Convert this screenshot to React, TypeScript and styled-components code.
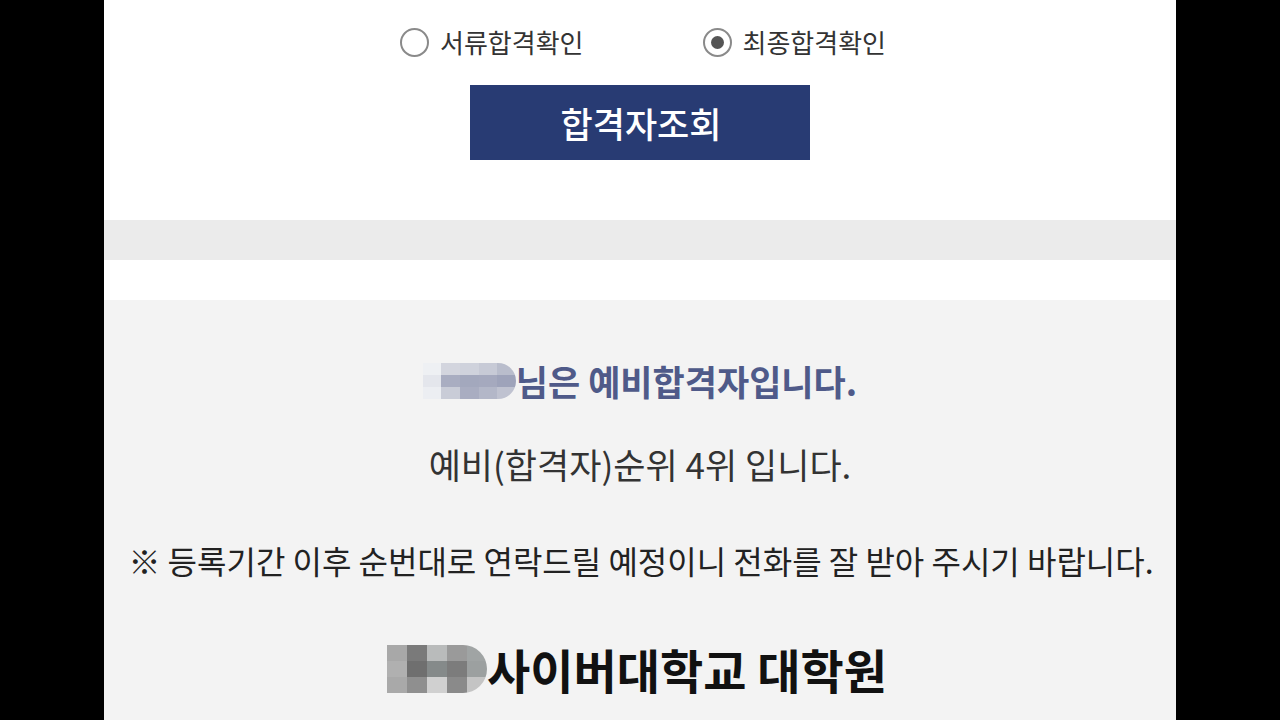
import React from "react";
import styled, { createGlobalStyle } from "styled-components";

const Global = createGlobalStyle`
  html, body { margin: 0; padding: 0; background: #000; }
  body { font-family: "Noto Sans CJK KR", "Noto Sans", sans-serif; }
`;

const Page = styled.div`
  width: 1072px;
  height: 720px;
  margin: 0 auto;
  background: #f3f3f3;
  overflow: hidden;
  display: flex;
  flex-direction: column;
`;

const TopSection = styled.section`
  background: #fff;
  height: 220px;
  display: flex;
  flex-direction: column;
  align-items: center;
  padding-top: 26px;
  box-sizing: border-box;
`;

const RadioRow = styled.div`
  display: flex;
  gap: 119px;
  align-items: center;
  padding-left: 6px;
`;

const RadioLabel = styled.label`
  display: flex;
  align-items: center;
  gap: 11px;
  font-size: 26px;
  color: #333;
  line-height: 32px;
`;

const RadioCircle = styled.span<{ $checked?: boolean }>`
  width: 29px;
  height: 29px;
  box-sizing: border-box;
  border-radius: 50%;
  border: 2px solid #8a8a8a;
  background: #fff;
  display: flex;
  align-items: center;
  justify-content: center;
  &::after {
    content: "";
    display: ${(p) => (p.$checked ? "block" : "none")};
    width: 13px;
    height: 13px;
    border-radius: 50%;
    background: #555;
  }
`;

const SearchButton = styled.button`
  margin-top: 27px;
  width: 340px;
  height: 75px;
  background: #283b73;
  border: none;
  color: #fff;
  font-family: "Noto Sans CJK KR", sans-serif;
  font-size: 35px;
  font-weight: 500;
  padding: 0;
  padding-left: 2px;
`;

const Band = styled.div<{ $bg: string; $h: number }>`
  height: ${(p) => p.$h}px;
  background: ${(p) => p.$bg};
`;

const Result = styled.section`
  flex: 1;
  background: #f3f3f3;
  display: flex;
  flex-direction: column;
  align-items: center;
  padding-top: 60px;
`;

const NameLine = styled.div`
  display: flex;
  align-items: center;
  font-size: 35px;
  font-weight: 700;
  color: #4f5a89;
  line-height: 42px;
`;

const Mosaic = styled.div<{ $cols: number; $cw: number; $rh: number }>`
  display: grid;
  grid-template-columns: repeat(${(p) => p.$cols}, ${(p) => p.$cw}px);
  grid-auto-rows: ${(p) => p.$rh}px;
  border-radius: 0 30px 30px 0;
  overflow: hidden;
`;

const Cell = styled.span<{ $c: string }>`
  background: ${(p) => p.$c};
`;

const RankLine = styled.div`
  margin-top: 41px;
  font-size: 35px;
  color: #333;
  line-height: 42px;
`;

const Notice = styled.div`
  margin-top: 54px;
  font-size: 32px;
  color: #222;
  line-height: 42px;
  padding-left: 2px;
`;

const SchoolTitle = styled.div`
  margin-top: 62px;
  display: flex;
  align-items: center;
  font-size: 47px;
  font-weight: 700;
  color: #111;
  line-height: 52px;
  margin-right: 6px;
`;

const nameCells = [
  "#eef0f3", "#d3d5de", "#cfd2dc", "#c7cad6", "#b9bdcc",
  "#e4e6ec", "#a9adc1", "#a3a8bd", "#a5a9be", "#9ea3ba",
  "#eceef2", "#c9ccd7", "#a9adc1", "#b3b7c8", "#bfc2d0",
];

const titleCells = [
  "#a8a8a8", "#7a7a7a", "#b9bbbb", "#9a9a9a", "#a0a4a4",
  "#b0b0b0", "#6f6f6f", "#858a8a", "#7c7c7c", "#9ca0a0",
  "#a9a9a9", "#8f8f8f", "#d0d0d0", "#8a8a8a", "#c4c4c4",
];

export default function App() {
  return (
    <>
      <Global />
      <Page>
        <TopSection>
          <RadioRow>
            <RadioLabel>
              <RadioCircle />
              서류합격확인
            </RadioLabel>
            <RadioLabel>
              <RadioCircle $checked />
              최종합격확인
            </RadioLabel>
          </RadioRow>
          <SearchButton>합격자조회</SearchButton>
        </TopSection>
        <Band $bg="#ebebeb" $h={40} />
        <Band $bg="#ffffff" $h={40} />
        <Result>
          <NameLine>
            <Mosaic $cols={5} $cw={18.6} $rh={12}>
              {nameCells.map((c, i) => (
                <Cell key={i} $c={c} />
              ))}
            </Mosaic>
            님은 예비합격자입니다.
          </NameLine>
          <RankLine>예비(합격자)순위 4위 입니다.</RankLine>
          <Notice>※ 등록기간 이후 순번대로 연락드릴 예정이니 전화를 잘 받아 주시기 바랍니다.</Notice>
          <SchoolTitle>
            <Mosaic $cols={5} $cw={20} $rh={16}>
              {titleCells.map((c, i) => (
                <Cell key={i} $c={c} />
              ))}
            </Mosaic>
            사이버대학교 대학원
          </SchoolTitle>
        </Result>
      </Page>
    </>
  );
}
